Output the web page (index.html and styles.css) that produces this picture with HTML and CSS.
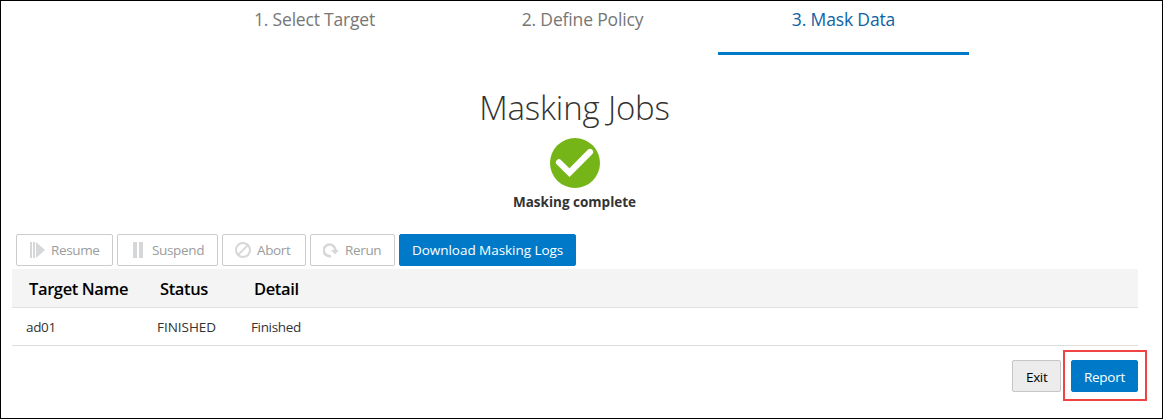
FILE: index.html
```html
<!DOCTYPE html>
<html lang="en">
<head>
<meta charset="utf-8">
<title>Masking Jobs</title>
<link rel="stylesheet" href="styles.css">
</head>
<body>
<main class="frame">
  <nav class="steps">
    <div class="step step-target"><span>1. Select Target</span></div>
    <div class="step step-policy"><span>2. Define Policy</span></div>
    <div class="step step-mask active"><span>3. Mask Data</span></div>
  </nav>
  <section class="summary">
    <h1 class="title">Masking Jobs</h1>
    <svg class="check" viewBox="0 0 50 50"><circle cx="25" cy="25" r="25" fill="#76b517"/><path d="M9 24.4 19.5 34.6 40 14" fill="none" stroke="#fff" stroke-width="6.2" stroke-linecap="round"/></svg>
    <p class="state">Masking complete</p>
  </section>
  <div class="toolbar">
    <button class="btn disabled resume"><svg class="icon" viewBox="0 0 16 16"><path d="M1 0h2v16H1zM4 0h2v16H4zM7 0l9 8-9 8z"/></svg><span>Resume</span></button>
    <button class="btn disabled suspend"><svg class="icon" viewBox="0 0 16 16"><path d="M3 0h4v16H3zM9 0h4v16H9z"/></svg><span>Suspend</span></button>
    <button class="btn disabled abort"><svg class="icon" viewBox="0 0 16 16"><g class="line"><circle cx="8" cy="8" r="7"/><path d="M3.1 12.9 12.9 3.1"/></g></svg><span>Abort</span></button>
    <button class="btn disabled rerun"><svg class="icon" viewBox="0 0 16 16"><path class="line thick" d="M8 13.9A5.8 5.8 0 1 1 12.3 8.4"/><path d="M8 8h8l-4 4.6z"/></svg><span>Rerun</span></button>
    <button class="btn primary download"><span>Download Masking Logs</span></button>
  </div>
  <table class="jobs">
    <colgroup><col class="col-name"><col class="col-status"><col></colgroup>
    <thead><tr><th>Target Name</th><th>Status</th><th>Detail</th></tr></thead>
    <tbody><tr><td>ad01</td><td class="code">FINISHED</td><td>Finished</td></tr></tbody>
  </table>
  <footer class="actions">
    <button class="btn exit"><span>Exit</span></button>
    <div class="highlight"><button class="btn primary report"><span>Report</span></button></div>
  </footer>
</main>
</body>
</html>
```
FILE: styles.css
```css
* { box-sizing: border-box; }
body { margin: 0; background: #fff; font-family: "Open Sans", "Noto Sans", sans-serif; font-size: 13.5px; color: #333; }
.frame { width: 1163px; height: 419px; border: 1px solid #000; overflow: hidden; }
.steps { display: flex; height: 54px; padding-left: 188px; }
.step { width: 251px; text-align: center; font-size: 17.5px; letter-spacing: -0.2px; line-height: 24px; padding-top: 6px; color: #767676; white-space: nowrap; }
.step-policy { margin-left: 17px; letter-spacing: -0.16px; }
.step-mask { margin-left: 10px; letter-spacing: -0.15px; }
.active { color: #0e62a5; border-bottom: 3px solid #007ac8; }
.summary { display: flex; flex-direction: column; align-items: center; width: 1147px; height: 179px; }
.title { margin: 31px 0 0; font-size: 33px; letter-spacing: -0.15px; line-height: 44px; font-weight: 300; white-space: nowrap; }
.check { width: 50px; height: 50px; margin-top: 8px; display: block; }
.state { margin: 4px 0 0; font-size: 13.5px; line-height: 20px; font-weight: 700; }
.toolbar { display: flex; gap: 4px; padding-left: 15px; height: 35px; }
.btn { display: flex; align-items: center; height: 32px; padding: 0 12px; border: 1px solid #c9c9c9; border-radius: 2px; background: #fff; color: #000; font: inherit; line-height: 20px; letter-spacing: -0.35px; white-space: nowrap; flex: none; }
.disabled { color: #9a9c9e; border-color: #cbccce; }
.icon { width: 16px; height: 16px; margin-right: 6px; fill: #d5d7d9; flex: none; }
.line { fill: none; stroke: #d5d7d9; stroke-width: 2; }
.thick { stroke-width: 2.6; }
.resume { width: 97px; }
.suspend { width: 101px; }
.abort { width: 84px; }
.rerun { width: 85px; }
.primary { border-color: #007ac8; background: #007ac8; color: #fff; }
.download { width: 177px; letter-spacing: -0.04px; }
.jobs { width: 1126px; margin-left: 11px; border-collapse: separate; border-spacing: 0; table-layout: fixed; }
.col-name { width: 131px; }
.col-status { width: 94px; }
.jobs th { height: 39px; padding: 2px 0 0 17px; text-align: left; background: #f4f4f4; border-bottom: 1px solid #e1e1e1; font-size: 16.5px; letter-spacing: -0.38px; line-height: 22px; font-weight: 600; color: #000; }
.jobs td { height: 38px; padding: 1px 0 0 14px; border-bottom: 1px solid #dedede; line-height: 20px; letter-spacing: -0.35px; }
.jobs .code { letter-spacing: -0.03px; }
.actions { display: flex; justify-content: flex-end; padding: 4px 15px 0 0; gap: 2px; }
.exit { width: 49px; margin-top: 10px; padding-left: 13px; background: #ececec; border-color: #c6c6c6; }
.exit span, .report span { padding-top: 2px; }
.highlight { width: 84px; height: 51px; padding: 8px 6px; border: 2px solid #f04444; }
.report { width: 67px; letter-spacing: -0.27px; }
```
